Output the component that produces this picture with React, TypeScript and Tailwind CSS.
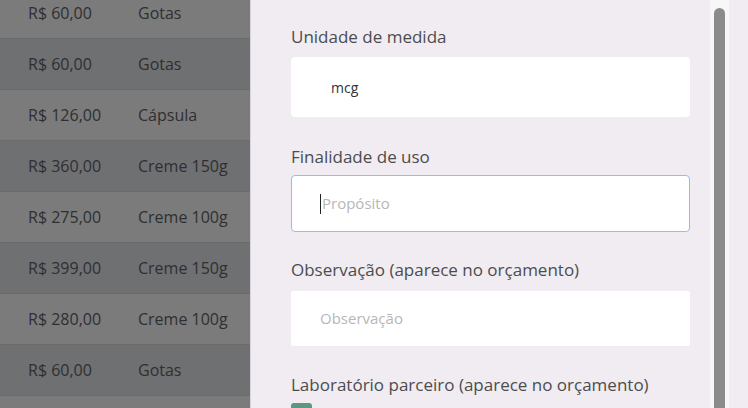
import { FC } from "react";

const rows = [
   { price: "R$ 60,00", form: "Gotas" },
   { price: "R$ 60,00", form: "Gotas" },
   { price: "R$ 126,00", form: "Cápsula" },
   { price: "R$ 360,00", form: "Creme 150g" },
   { price: "R$ 275,00", form: "Creme 100g" },
   { price: "R$ 399,00", form: "Creme 150g" },
   { price: "R$ 280,00", form: "Creme 100g" },
   { price: "R$ 60,00", form: "Gotas" },
];

const App: FC = () => {
   return (
      <div className="flex h-[408px] w-[748px] overflow-hidden font-['Open_Sans',sans-serif]">
         {/* dimmed table behind the drawer */}
         <div className="w-[250px] shrink-0 bg-[#7b7b7c]">
            <div className="-mt-[12px] flex flex-col">
               {rows.map((row, i) => (
                  <div
                     key={i}
                     className={`flex h-[51px] shrink-0 items-center border-b border-[#6a6a6b] text-[16px] text-[#2e2f31] ${
                        i % 2 === 1 ? "bg-[#6f7072]" : "bg-[#7b7b7c]"
                     }`}
                  >
                     <span className="w-[138px] pl-[28px]">{row.price}</span>
                     <span>{row.form}</span>
                  </div>
               ))}
               <div className="h-[51px] shrink-0 bg-[#7b7b7c]" />
            </div>
         </div>

         {/* drawer */}
         <div className="flex flex-1 border-l border-[#d9d4db] bg-[#f0ecf1]">
            <div className="flex w-[459px] flex-col pl-[40px] pr-[20px] pt-[26px] text-[17px] text-[#4c4c4e]">
               <label className="shrink-0 leading-[22px]">Unidade de medida</label>
               <div className="mt-[9px] flex h-[60px] shrink-0 items-center rounded-[4px] bg-white pl-[40px] text-[14px] text-[#333]">
                  mcg
               </div>

               <label className="mt-[29px] shrink-0 leading-[22px]">Finalidade de uso</label>
               <div className="mt-[7px] flex h-[57px] shrink-0 items-center rounded-[4px] border border-[#93bcef] bg-white pl-[28px] text-[15px] text-[#b7b6b9]">
                  <span className="mr-[1px] h-[20px] w-px bg-[#222]" />
                  Propósito
               </div>

               <label className="mt-[27px] shrink-0 leading-[22px]">Observação (aparece no orçamento)</label>
               <div className="mt-[10px] flex h-[55px] shrink-0 items-center rounded-[2px] bg-white pl-[29px] text-[15px] text-[#b7b6b9]">
                  Observação
               </div>

               <label className="mt-[28px] shrink-0 leading-[22px]">Laboratório parceiro (aparece no orçamento)</label>
               <div className="mt-[7px] h-[20px] w-[21px] shrink-0 rounded-[3px] bg-[#5b9883]" />
            </div>

            {/* scrollbar */}
            <div className="w-[19px] shrink-0 bg-[#f7f6f8] px-[4px] pt-[8px]">
               <div className="h-[420px] w-[11px] rounded-t-full bg-[#8b8b8b]" />
            </div>
         </div>
      </div>
   );
};

export default App;
